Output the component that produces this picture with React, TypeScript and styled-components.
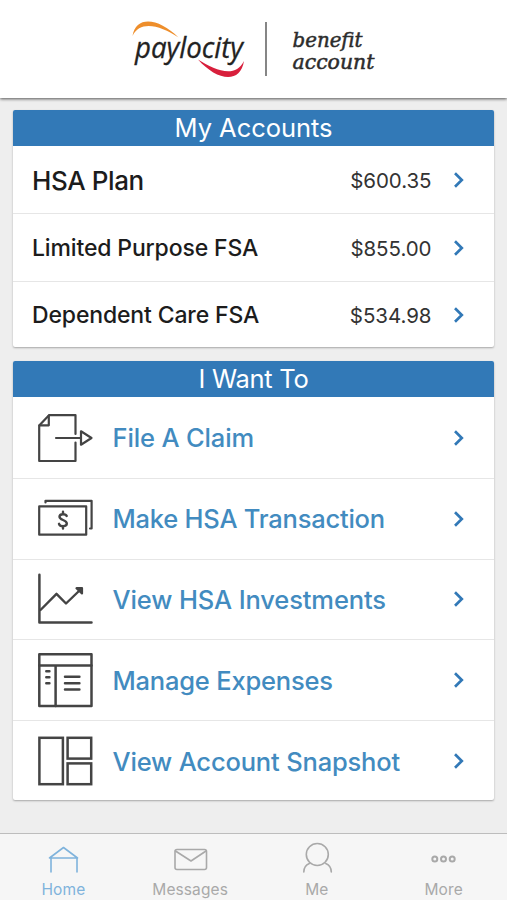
import React from "react";
import styled, { createGlobalStyle } from "styled-components";

const GlobalStyle = createGlobalStyle`
  * { box-sizing: border-box; }
  html, body { margin: 0; padding: 0; background: #eeeeee; }
  body { font-family: Inter, "Liberation Sans", sans-serif; }
`;

const Screen = styled.div`
  display: flex;
  flex-direction: column;
  width: 507px;
  height: 900px;
  overflow: hidden;
  background: #eeeeee;
`;

const Header = styled.header`
  height: 98px;
  flex: none;
  background: #fff;
  box-shadow: 0 1px 3px rgba(0, 0, 0, 0.65);
  svg { display: block; }
`;

const Content = styled.main`
  flex: 1;
  display: flex;
  flex-direction: column;
  gap: 14px;
  padding: 12px 13px 0;
`;

const Card = styled.section`
  background: #fff;
  border-radius: 2px;
  overflow: hidden;
  box-shadow: 0 1px 2px rgba(0, 0, 0, 0.3);
`;

const CardTitle = styled.h2<{ $spacing: number }>`
  margin: 0;
  height: 36px;
  line-height: 36px;
  text-align: center;
  color: #fff;
  background: #3279b7;
  font-size: 25.5px;
  font-weight: 400;
  letter-spacing: ${(p) => p.$spacing}px;
`;

const Row = styled.div<{ $height: number; $top: number }>`
  display: flex;
  align-items: center;
  height: ${(p) => p.$height}px;
  padding: ${(p) => p.$top}px 29px 0 19px;
  & + & { border-top: 1px solid #e6e6e6; }
`;

const AccountName = styled.span<{ $size: number; $spacing: number }>`
  flex: 1;
  color: #1c1c1c;
  font-size: ${(p) => p.$size}px;
  font-weight: 500;
  letter-spacing: ${(p) => p.$spacing}px;
  white-space: nowrap;
`;

const Amount = styled.span`
  width: 84px;
  margin-right: 21.5px;
  text-align: right;
  color: #333;
  font-size: 20.5px;
  letter-spacing: -0.05px;
  white-space: nowrap;
`;

const ActionIcon = styled.svg`
  flex: none;
  width: 58px;
  height: 60px;
  margin: 0 17px 0 4px;
  fill: none;
  stroke: #444;
  stroke-width: 2.2;
  stroke-linejoin: round;
  stroke-linecap: round;
`;

const ActionName = styled.span<{ $spacing: number }>`
  flex: 1;
  margin-left: 1.5px;
  color: #428bc0;
  font-size: 25.5px;
  font-weight: 500;
  letter-spacing: ${(p) => p.$spacing}px;
  white-space: nowrap;
`;

const ChevronSvg = styled.svg`
  flex: none;
  width: 12px;
  height: 18px;
`;

const TabBar = styled.nav`
  flex: none;
  display: grid;
  grid-template-columns: repeat(4, 1fr);
  height: 67px;
  background: #f6f6f6;
  border-top: 1px solid #bdbdbd;
`;

const Tab = styled.div<{ $active?: boolean }>`
  display: flex;
  flex-direction: column;
  align-items: center;
  padding-top: 6px;
  color: ${(p) => (p.$active ? "#7fb3dc" : "#a9a9a9")};
  svg {
    width: 40px;
    height: 38px;
    fill: none;
    stroke: currentColor;
    stroke-width: 1.6;
    stroke-linejoin: round;
    stroke-linecap: round;
  }
`;

const TabLabel = styled.span`
  margin-top: 2px;
  font-size: 15.5px;
  line-height: 20px;
  letter-spacing: 0.1px;
`;

const Chevron = () => (
  <ChevronSvg viewBox="0 0 12 18">
    <path d="M2 2.3 L8.8 9 L2 15.7" fill="none" stroke="#3279b7" strokeWidth="2.7" />
  </ChevronSvg>
);

const Logo = () => (
  <svg width="507" height="98" viewBox="0 0 507 98">
    <path d="M132.5 36 C136 15 159 18 178.5 37.5 C160 25 140 20 132.5 36Z" fill="#ee8e2b" />
    <path d="M198 59.5 C215 70 235 79 244 61 C240 85 216 80 198 59.5Z" fill="#d81f3c" />
    <text x="135" y="58" textLength="108" lengthAdjust="spacingAndGlyphs" fontFamily="'Open Sans'" fontStyle="italic" fontWeight="500" fontSize="29.5" fill="#222" stroke="#222" strokeWidth=".3">paylocity</text>
    <path d="M266 22V76" stroke="#444" strokeWidth="1.3" />
    <g fontFamily="'DejaVu Serif'" fontStyle="italic" fontSize="20" fill="#2c2c2c" stroke="#2c2c2c" strokeWidth=".5">
      <text x="292.5" y="47" textLength="70" lengthAdjust="spacingAndGlyphs">benefit</text>
      <text x="292.5" y="69" textLength="82" lengthAdjust="spacingAndGlyphs">account</text>
    </g>
  </svg>
);

const claimIcon = (
  <>
    <path d="M39.5 26V7.2H13L3.2 17.5V53H39.5V34.5" />
    <path d="M12.8 7.5V17.3H3.5" />
    <path d="M20 30H44" />
    <path d="M45 23.3L55.5 30L45 36.7Z" />
  </>
);
const moneyIcon = (
  <>
    <rect x="3.2" y="17.4" width="47" height="28.3" />
    <path d="M9.5 13.5V11.8H55.6V39.5H54" />
    <path d="M30.7 27C29.8 24.6 23.5 24.4 23.5 27.8C23.5 31.4 30.8 30.6 30.8 34.5C30.8 38 24 38 23 34.8M27 22.8V25M27 37.5V39.5" strokeWidth="2.4" />
  </>
);
const chartIcon = (
  <>
    <path d="M3.4 5.8V53.5H55.5" strokeWidth="2.5" />
    <path d="M4.5 41L20.5 24.8L30 34.5L43 22" strokeWidth="2.4" />
    <path d="M40.5 19.2H46V24.5Z" fill="#444" />
  </>
);
const expenseIcon = (
  <g strokeWidth="2.5">
    <rect x="3.3" y="4.3" width="52.2" height="51.8" />
    <path d="M3.3 15.4H55.5M19.6 15.4V56" />
    <path d="M10.3 21.3H13.4M10.3 27.3H13.4M10.3 33.3H13.4M29 26.7H43.4M29 33.2H43.4M29 39.6H43.4" />
  </g>
);
const snapshotIcon = (
  <g strokeWidth="2.5" strokeLinejoin="miter">
    <rect x="3.4" y="6.8" width="23.5" height="46.4" />
    <rect x="31.6" y="6.8" width="23.6" height="20.8" />
    <rect x="31.6" y="32.4" width="23.6" height="20.8" />
  </g>
);

const accounts = [
  { name: "HSA Plan", amount: "$600.35", height: 67, size: 26, spacing: -0.4 },
  { name: "Limited Purpose FSA", amount: "$855.00", height: 68, size: 23, spacing: -0.15 },
  { name: "Dependent Care FSA", amount: "$534.98", height: 66, size: 23, spacing: -0.15 },
];

const actions = [
  { name: "File A Claim", icon: claimIcon, spacing: -0.15, height: 81, top: 0 },
  { name: "Make HSA Transaction", icon: moneyIcon, spacing: -0.23, height: 80.5, top: 0 },
  { name: "View HSA Investments", icon: chartIcon, spacing: -0.12, height: 80.5, top: 0 },
  { name: "Manage Expenses", icon: expenseIcon, spacing: -0.2, height: 81, top: 0 },
  { name: "View Account Snapshot", icon: snapshotIcon, spacing: -0.17, height: 80, top: 1 },
];

const tabs = [
  { name: "Home", icon: <path d="M6.5 18L20.5 7.5L34.5 18ZM8 18V32M34 18V32" /> },
  {
    name: "Messages",
    icon: <><rect x="5" y="9.5" width="31.5" height="20" rx="2" /><path d="M5.5 11L21 21L36 11" /></>,
  },
  {
    name: "Me",
    icon: <><circle cx="20.3" cy="14.5" r="11" /><path d="M6.8 32C6.8 28 8.8 25 12.3 23.5M34.3 32C34.3 28 32.3 25 28.8 23.5" /></>,
  },
  {
    name: "More",
    icon: <g strokeWidth="2"><circle cx="10.8" cy="19" r="2.5" /><circle cx="19.5" cy="19" r="2.5" /><circle cx="28.2" cy="19" r="2.5" /></g>,
  },
];

export default function App() {
  return (
    <Screen>
      <GlobalStyle />
      <Header><Logo /></Header>
      <Content>
        <Card>
          <CardTitle $spacing={-0.05}>My Accounts</CardTitle>
          {accounts.map((a) => (
            <Row key={a.name} $height={a.height} $top={1}>
              <AccountName $size={a.size} $spacing={a.spacing}>{a.name}</AccountName>
              <Amount>{a.amount}</Amount>
              <Chevron />
            </Row>
          ))}
        </Card>
        <Card>
          <CardTitle $spacing={-0.3}>I Want To</CardTitle>
          {actions.map((a) => (
            <Row key={a.name} $height={a.height} $top={a.top}>
              <ActionIcon viewBox="0 0 58 60">{a.icon}</ActionIcon>
              <ActionName $spacing={a.spacing}>{a.name}</ActionName>
              <Chevron />
            </Row>
          ))}
        </Card>
      </Content>
      <TabBar>
        {tabs.map((t, i) => (
          <Tab key={t.name} $active={i === 0}>
            <svg viewBox="0 0 40 38">{t.icon}</svg>
            <TabLabel>{t.name}</TabLabel>
          </Tab>
        ))}
      </TabBar>
    </Screen>
  );
}
